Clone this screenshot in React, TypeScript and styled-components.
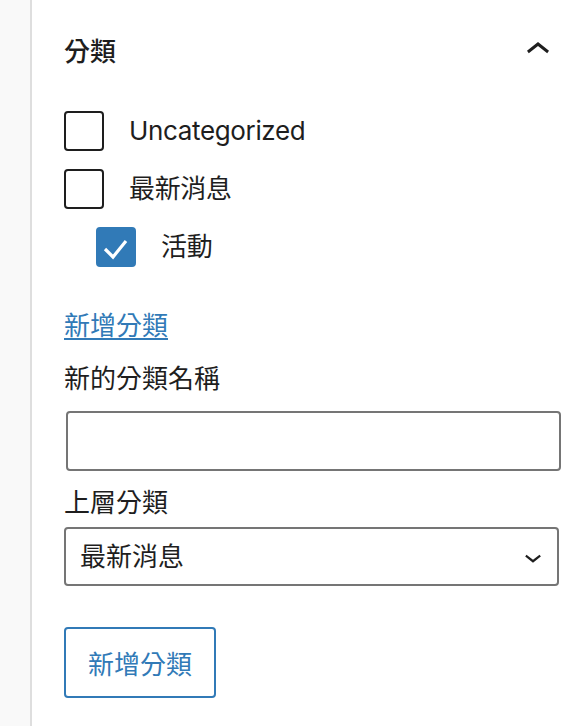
import React from "react";
import styled, { createGlobalStyle } from "styled-components";

const Global = createGlobalStyle`
  html, body { margin: 0; padding: 0; background: #fff; }
  body { font-family: "Inter", "Noto Sans CJK TC", sans-serif; color: #1e1e1e; }
  * { box-sizing: border-box; }
`;

const BLUE = "#317ab7";

const Page = styled.div`
  display: flex;
  min-height: 726px;
`;

const Gutter = styled.div`
  width: 32px;
  flex: none;
  background: #f9f9f9;
  border-right: 2px solid #dedede;
`;

const Panel = styled.section`
  flex: 1;
  padding: 0 29px 0 32px;
  display: flex;
  flex-direction: column;
`;

const Header = styled.div`
  height: 100px;
  display: flex;
  align-items: center;
  justify-content: space-between;
`;

const Title = styled.h2`
  margin: 0;
  padding-top: 4px;
  font-size: 26px;
  line-height: 36px;
  font-weight: 500;
`;

const Toggle = styled.button`
  width: 48px;
  height: 48px;
  padding: 0;
  margin-right: -1px;
  border: 0;
  background: none;
  display: flex;
  align-items: center;
  justify-content: center;
  color: #1e1e1e;
`;

const List = styled.div`
  display: flex;
  flex-direction: column;
  gap: 18px;
  margin-top: 11px;
`;

const Row = styled.label<{ $indent?: boolean }>`
  display: flex;
  align-items: center;
  gap: 25px;
  padding-left: ${(p) => (p.$indent ? 32 : 0)}px;
  font-size: 26px;
  line-height: 36px;
  letter-spacing: -0.35px;
`;

const Box = styled.span<{ $checked?: boolean }>`
  width: 40px;
  height: 40px;
  flex: none;
  border-radius: 4px;
  border: 2px solid ${(p) => (p.$checked ? BLUE : "#1e1e1e")};
  background: ${(p) => (p.$checked ? BLUE : "#fff")};
  display: flex;
  align-items: center;
  justify-content: center;
`;

const AddLink = styled.a`
  margin-top: 41px;
  align-self: flex-start;
  font-size: 26px;
  line-height: 36px;
  color: ${BLUE};
  text-decoration: underline;
  text-decoration-thickness: 2px;
  text-underline-offset: 3px;
`;

const FieldLabel = styled.label<{ $top: number }>`
  display: block;
  margin-top: ${(p) => p.$top}px;
  font-size: 26px;
  line-height: 36px;
`;

const TextInput = styled.input`
  display: block;
  margin: 14px 0 0 2px;
  width: 495px;
  height: 60px;
  border: 2px solid #757575;
  border-radius: 4px;
  font: inherit;
  font-size: 26px;
  padding: 0 16px;
  background: #fff;
`;

const SelectWrap = styled.div`
  position: relative;
  margin-top: 6px;
  width: 495px;
`;

const Select = styled.select`
  display: block;
  width: 100%;
  height: 59px;
  appearance: none;
  border: 2px solid #757575;
  border-radius: 4px;
  background: #fff;
  color: #1e1e1e;
  font-family: "Inter", "Noto Sans CJK TC", sans-serif;
  font-size: 26px;
  padding: 0 48px 0 14px;
`;

const SelectIcon = styled.svg`
  position: absolute;
  right: 9px;
  top: 50%;
  transform: translateY(-50%);
  pointer-events: none;
`;

const SubmitButton = styled.button`
  margin-top: 41px;
  align-self: flex-start;
  height: 71px;
  padding: 0 22px;
  border: 2px solid ${BLUE};
  border-radius: 4px;
  background: #fff;
  color: ${BLUE};
  font-family: "Inter", "Noto Sans CJK TC", sans-serif;
  font-size: 26px;
`;

const categories = [
  { name: "Uncategorized", checked: false, indent: false },
  { name: "最新消息", checked: false, indent: false },
  { name: "活動", checked: true, indent: true },
];

export default function App() {
  return (
    <Page>
      <Global />
      <Gutter />
      <Panel>
        <Header>
          <Title>分類</Title>
          <Toggle aria-label="收合">
            <svg width="48" height="48" viewBox="0 0 24 24">
              <path d="M6.5 12.4L12 8l5.5 4.4-.9 1.2L12 10l-4.6 3.6-.9-1.2z" fill="currentColor" />
            </svg>
          </Toggle>
        </Header>
        <List>
          {categories.map((c) => (
            <Row key={c.name} $indent={c.indent}>
              <Box $checked={c.checked}>
                {c.checked && (
                  <svg width="40" height="40" viewBox="0 0 40 40" style={{ margin: -2 }}>
                    <path d="M9 22l8 8 13-16" fill="none" stroke="#fff" strokeWidth="3.2" />
                  </svg>
                )}
              </Box>
              <span>{c.name}</span>
            </Row>
          ))}
        </List>
        <AddLink href="#">新增分類</AddLink>
        <FieldLabel $top={17}>新的分類名稱</FieldLabel>
        <TextInput type="text" />
        <FieldLabel $top={14}>上層分類</FieldLabel>
        <SelectWrap>
          <Select defaultValue="news">
            <option value="news">最新消息</option>
          </Select>
          <SelectIcon width="34" height="34" viewBox="0 0 24 24">
            <path d="M17.5 11.6L12 16l-5.5-4.4.9-1.2L12 14l4.6-3.6 1 1.2z" fill="#1e1e1e" />
          </SelectIcon>
        </SelectWrap>
        <SubmitButton>新增分類</SubmitButton>
      </Panel>
    </Page>
  );
}
